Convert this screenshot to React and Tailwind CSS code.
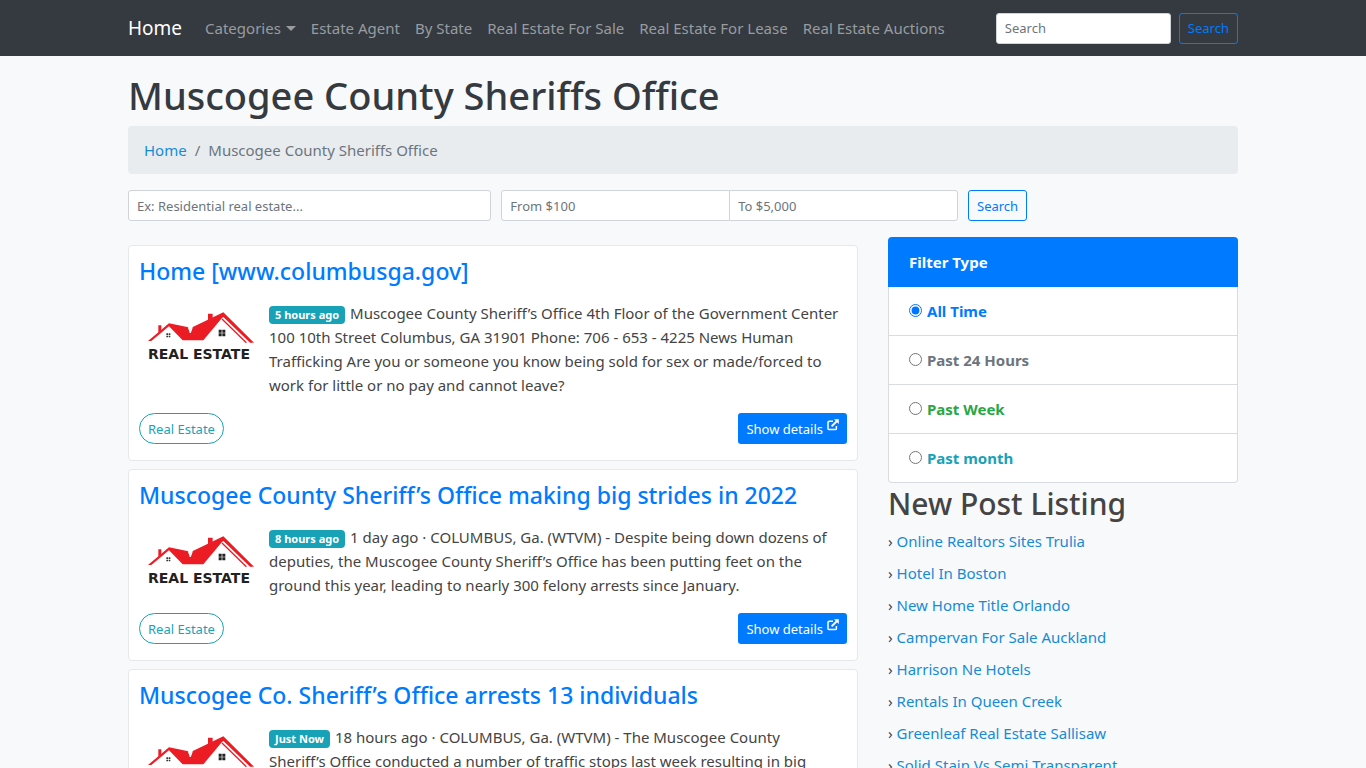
import React, { useState } from 'react'

const navLinks = ['Estate Agent', 'By State', 'Real Estate For Sale', 'Real Estate For Lease', 'Real Estate Auctions']

const posts = [
  {
    id: 1,
    title: 'Home [www.columbusga.gov]',
    time: '5 hours ago',
    text: 'Muscogee County Sheriff’s Office 4th Floor of the Government Center 100 10th Street Columbus, GA 31901 Phone: 706 - 653 - 4225 News Human Trafficking Are you or someone you know being sold for sex or made/forced to work for little or no pay and cannot leave?'
  },
  {
    id: 2,
    title: 'Muscogee County Sheriff’s Office making big strides in 2022',
    time: '8 hours ago',
    text: '1 day ago · COLUMBUS, Ga. (WTVM) - Despite being down dozens of deputies, the Muscogee County Sheriff’s Office has been putting feet on the ground this year, leading to nearly 300 felony arrests since January.'
  },
  {
    id: 3,
    title: 'Muscogee Co. Sheriff’s Office arrests 13 individuals',
    time: 'Just Now',
    text: '18 hours ago · COLUMBUS, Ga. (WTVM) - The Muscogee County Sheriff’s\u00a0Office conducted a number of traffic stops last week resulting in big'
  }
]

const filters = [
  { value: 'all', label: 'All Time', color: 'text-[#007bff]' },
  { value: 'day', label: 'Past 24 Hours', color: 'text-[#6c757d]' },
  { value: 'week', label: 'Past Week', color: 'text-[#28a745]' },
  { value: 'month', label: 'Past month', color: 'text-[#17a2b8]' }
]

const listings = [
  'Online Realtors Sites Trulia',
  'Hotel In Boston',
  'New Home Title Orlando',
  'Campervan For Sale Auckland',
  'Harrison Ne Hotels',
  'Rentals In Queen Creek',
  'Greenleaf Real Estate Sallisaw',
  'Solid Stain Vs Semi Transparent'
]

const inputClass = 'h-[31px] min-w-0 border border-[#ced4da] bg-white px-2 text-[13px] text-[#495057] placeholder-[#6c757d] outline-none'
const outlineButton = 'h-[31px] rounded-[3px] border border-[#007bff] px-2 text-[13px] text-[#007bff]'

function Logo() {
  return (
    <svg viewBox="-3 3 360 204" className="h-[68px] w-[120px] shrink-0" role="img" aria-label="Real Estate">
      <g fill="#ec1c24">
        <path d="M55 76h9v15l-9 7z" />
        <path d="M204 41h14v12l-14 8z" />
        <path d="M250 37 157 82 151 98 145 82 87 70 24 123H34L87 79 128 121H190L246 54 250 51 330 128H342Z" />
      </g>
      <path d="M246 57 319 128" stroke="#ec1c24" strokeWidth="4" fill="none" />
      <path d="M145 82 151 99 157 82" stroke="#fff" strokeWidth="3" fill="none" />
      <path d="M79 100h5v5h-5zM86 100h5v5h-5zM79 107h5v5h-5zM86 107h5v5h-5z" fill="#333" />
      <path d="M236 89h9v9h-9zM247 89h9v9h-9zM236 100h9v9h-9zM247 100h9v9h-9z" fill="#222" />
      <text x="24" y="176" fontSize="42" fontWeight="700" fill="#222" fontFamily="DejaVu Sans, sans-serif">REAL ESTATE</text>
    </svg>
  )
}

function ExternalIcon() {
  return (
    <svg viewBox="0 0 12 12" className="mb-2 ml-1 inline-block size-3" fill="none" stroke="currentColor" aria-hidden="true">
      <path d="M6 2.2H2.2Q1 2.2 1 3.4V9.4Q1 10.6 2.2 10.6H8.2Q9.4 10.6 9.4 9.4V7" strokeWidth="1.5" />
      <path d="M4.6 7.4 10 2" strokeWidth="1.9" />
      <path d="M7 .3H11.8V5.1Z" fill="currentColor" stroke="none" />
    </svg>
  )
}

function PostCard({ post }) {
  return (
    <article className="mb-2 rounded border border-[#e6e8eb] bg-white px-2.5 pt-2.5 pb-4">
      <h2 className="mb-[15px] text-[23px] leading-[30px] font-medium text-[#007bff]"><a href="#">{post.title}</a></h2>
      <div className="mb-4 flex gap-2.5">
        <Logo />
        <p className="text-[15px] leading-6">
          <span className="mr-[5px] inline-block rounded bg-[#17a2b8] px-1.5 text-[11px] leading-[18px] font-bold text-white">{post.time}</span>
          {post.text}
        </p>
      </div>
      <div className="flex items-center justify-between">
        <a href="#" className="flex h-[31px] items-center rounded-full border border-[#17a2b8] px-2 text-[13px] text-[#17a2b8]">Real Estate</a>
        <a href="#" className="flex h-[31px] items-center rounded-[3px] bg-[#007bff] px-2 text-[13px] text-white">
          Show details<ExternalIcon />
        </a>
      </div>
    </article>
  )
}

export default function App() {
  const [filter, setFilter] = useState('all')

  return (
    <div className="h-screen overflow-hidden bg-[#f8f9fa] font-['Noto_Sans','Open_Sans',sans-serif] text-[15px] leading-6 text-[#444]">
      <nav className="bg-[#343a40]">
        <div className="mx-auto flex h-14 max-w-[1110px] items-center">
          <a href="#" className="mr-[23px] text-[19px] text-white">Home</a>
          <div className="flex items-center gap-[15px] whitespace-nowrap text-[#999c9f]">
            <button type="button" className="flex items-center">
              Categories
              <span className="ml-[5px] border-x-[5px] border-t-[5px] border-x-transparent border-t-current" />
            </button>
            {navLinks.map(link => <a href="#" key={link}>{link}</a>)}
          </div>
          <form className="ml-auto flex gap-2" onSubmit={e => e.preventDefault()}>
            <input type="text" placeholder="Search" aria-label="Search" className={`${inputClass} w-[175px] rounded-[3px]`} />
            <button type="submit" className={outlineButton}>Search</button>
          </form>
        </div>
      </nav>

      <main className="mx-auto max-w-[1110px]">
        <h1 className="pt-4 pb-2 text-[38px] leading-[46px] font-medium text-[#343a40]">Muscogee County Sheriffs Office</h1>
        <nav aria-label="breadcrumb" className="mb-4 flex gap-2 rounded bg-[#e9ecef] px-4 py-3 text-[#6c757d]">
          <a href="#" className="text-[#158bd6]">Home</a>
          <span>/</span>
          <span>Muscogee County Sheriffs Office</span>
        </nav>

        <form className="mb-4 grid grid-cols-12 gap-2.5" onSubmit={e => e.preventDefault()}>
          <input type="text" placeholder="Ex: Residential real estate..." aria-label="Keyword" className={`${inputClass} col-span-4 rounded-[3px]`} />
          <div className="col-span-5 flex">
            <input type="text" placeholder="From $100" aria-label="Price from" className={`${inputClass} flex-1 rounded-l-[3px]`} />
            <input type="text" placeholder="To $5,000" aria-label="Price to" className={`${inputClass} -ml-px flex-1 rounded-r-[3px]`} />
          </div>
          <button type="submit" className={`${outlineButton} col-span-3 justify-self-start`}>Search</button>
        </form>

        <div className="flex gap-[30px]">
          <section className="min-w-0 flex-1 pt-2">
            {posts.map(post => <PostCard key={post.id} post={post} />)}
          </section>

          <aside className="w-[350px] shrink-0">
            <div className="font-bold">
              <div className="rounded-t bg-[#007bff] px-[21px] py-[13px] text-white">Filter Type</div>
              <div className="rounded-b border border-t-0 border-[#d9dcdf] bg-white">
                {filters.map(f => (
                  <label key={f.value} className={`flex items-center gap-[5px] border-b border-[#d9dcdf] px-5 py-3 last:border-b-0 ${f.color}`}>
                    <input type="radio" name="filter" className="mb-px size-[13px]" checked={filter === f.value} onChange={() => setFilter(f.value)} />
                    {f.label}
                  </label>
                ))}
              </div>
            </div>
            <h3 className="mb-1 text-[30px] leading-[42px] font-medium">New Post Listing</h3>
            <ul>
              {listings.map(item => (
                <li key={item} className="mb-2">› <a href="#" className="text-[#158bd6]">{item}</a></li>
              ))}
            </ul>
          </aside>
        </div>
      </main>
    </div>
  )
}
